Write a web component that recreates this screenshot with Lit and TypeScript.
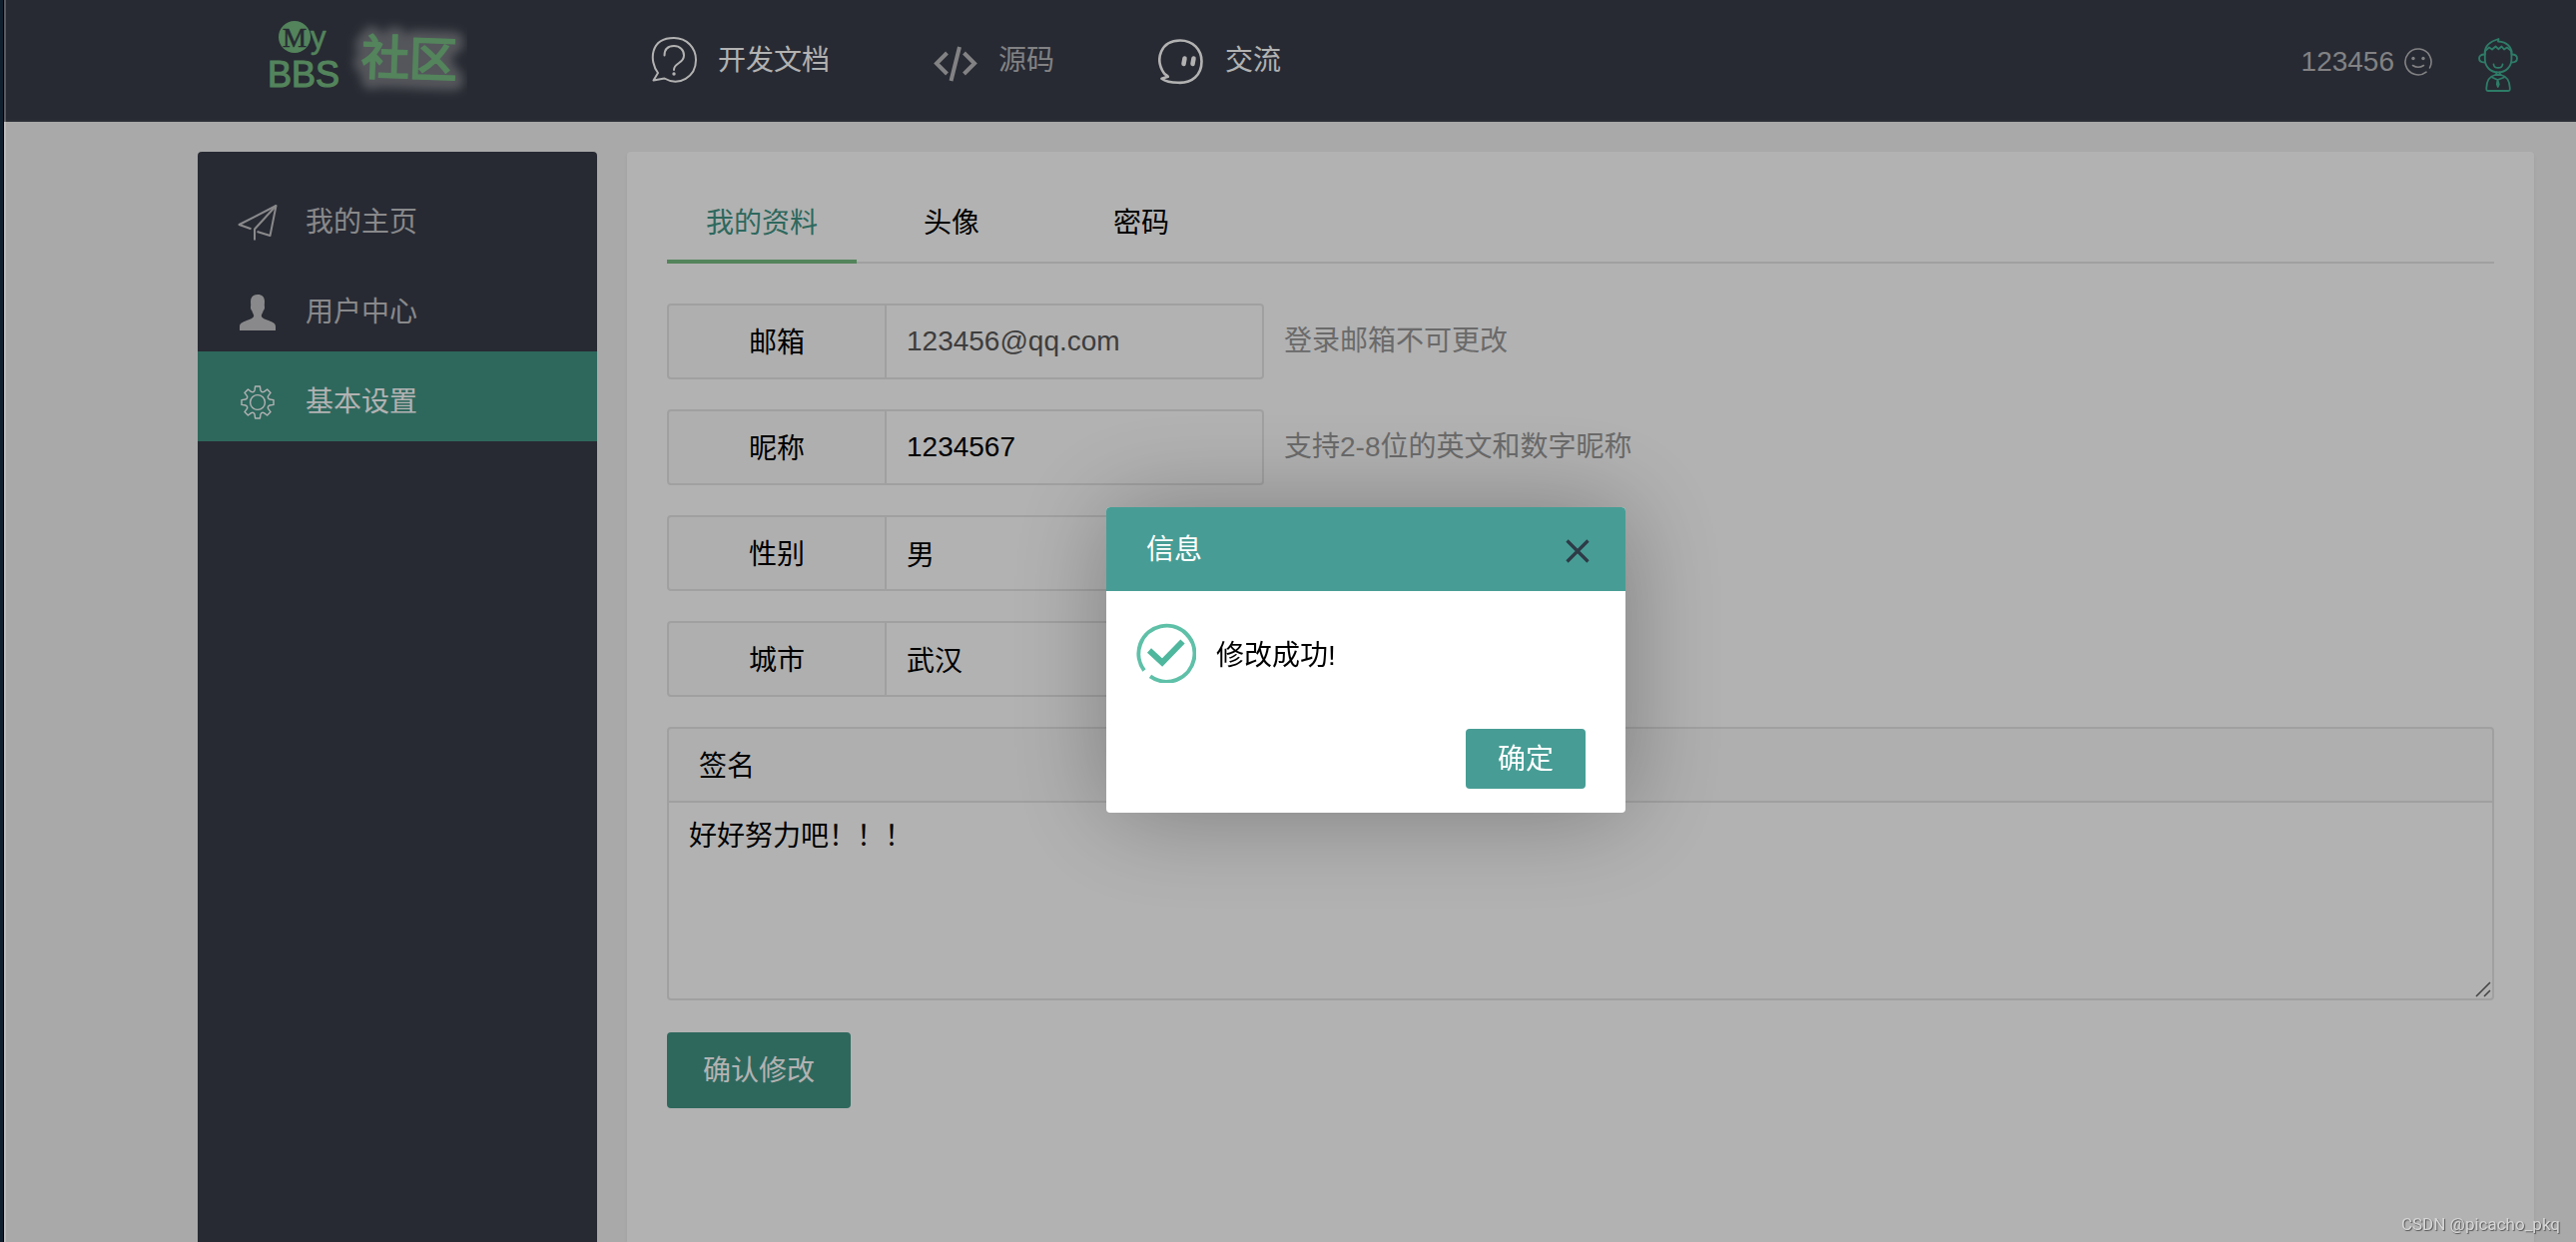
import { LitElement, html, css, svg } from "lit";
import { customElement, state } from "lit/decorators.js";
import { classMap } from "lit/directives/class-map.js";

/** Outline of a cog with eight teeth, centred on (c, c). */
function cogPath(c: number, outer: number, root: number): string {
  const pts: string[] = [];
  for (let i = 0; i < 8; i++) {
    const mid = (i * Math.PI) / 4 - Math.PI / 2;
    const at = (r: number, a: number) =>
      `${(c + r * Math.cos(mid + a)).toFixed(2)} ${(c + r * Math.sin(mid + a)).toFixed(2)}`;
    pts.push(
      `${i ? "L" : "M"}${at(root, -0.24)} L${at(outer, -0.15)} L${at(outer, 0.15)} L${at(root, 0.24)} Q${at(root - 2, Math.PI / 8)} ${at(root, Math.PI / 4 - 0.24)}`
    );
  }
  return pts.join(" ") + "Z";
}

const icons = {
  question: svg`<svg class="icon" width="46" height="46" viewBox="0 0 46 46" fill="none" stroke="currentColor" stroke-width="2" stroke-linejoin="round" aria-hidden="true">
    <path d="M7 36 C-2 24 -1 1 23 1 C36 1 45 11 45 23 C45 40 28 50 13.500 41.500 L2.500 43.500 Z"/>
    <path d="M13.500 18.500 C13.500 12 17 9 23 9 S33 13 33 18.500 C33 27 23 25.500 23 33" stroke-linecap="round"/>
    <circle cx="23" cy="37" r="1.700" fill="currentColor" stroke="none"/></svg>`,
  code: svg`<svg class="icon" width="44" height="44" viewBox="0 -8 44 44" fill="none" stroke="currentColor" stroke-width="4" aria-hidden="true">
    <path d="M13.500 7 L3 17.500 L13.500 28 M30.500 7 L41 17.500 L30.500 28 M26 1 L17.500 35"/></svg>`,
  chat: svg`<svg class="icon" width="46" height="50" viewBox="0 -4 46 50" fill="none" stroke="currentColor" stroke-width="2.600" stroke-linecap="round" stroke-linejoin="round" aria-hidden="true">
    <path d="M6 34.500 C-4 20 3 1.500 22 1.500 C35 1.500 43.500 11 43.500 22.500 C43.500 36 34 44.500 20 43.800 C13 43.800 7 42.500 3.500 39.800 L9.800 37.800 C9.500 36.500 7 36 6 34.500 Z"/>
    <path d="M26.500 19.500 L25.500 25 M35.500 19.500 L34.500 25" stroke-width="4.500"/></svg>`,
  smile: svg`<svg class="icon" width="28" height="28" viewBox="0 0 28 28" fill="none" stroke="currentColor" stroke-width="1.600" stroke-linecap="round" aria-hidden="true">
    <path d="M22 24.200 A13 13 0 1 1 25.500 20"/>
    <path d="M8.500 17.500 Q14 21 19.500 17.500"/>
    <circle cx="9" cy="10.500" r="1.700" fill="currentColor" stroke="none"/><circle cx="19" cy="10.500" r="1.700" fill="currentColor" stroke="none"/></svg>`,
  avatar: svg`<svg class="icon" width="40" height="54" viewBox="0 0 40 54" fill="none" stroke="currentColor" stroke-width="1.800" stroke-linejoin="round" stroke-linecap="round" aria-hidden="true">
    <path d="M6.800 16 C6 8 12 3.500 20.500 1 L20 3.500 C29 4 34 9 33.400 16"/>
    <path d="M7 13 L11 9.500 L14 11.500 L17.500 8.500 L20.300 11.200 L23.500 8.500 L26 11.500 L29 9.500 L33.200 13"/>
    <path d="M6.800 13 V21 C6.800 29 12.500 34.500 20.100 34.500 S33.400 29 33.400 21 V13"/>
    <path d="M6.500 16.500 C2.500 16.500 1 18.500 1 20.500 S2.800 24.500 6.800 24.500 M33.700 16.500 C37.500 16.500 39 18.500 39 20.500 S37.400 24.500 33.400 24.500"/>
    <path d="M15.500 26.500 C16 31 24 31 24.500 26.500"/>
    <path d="M18.300 34.500 V37 M21.800 34.500 V37 M17 37 C11 38.500 8.500 44 8.300 50 C8.200 52.500 8.500 53 10.500 53 H29.500 C31.600 53 31.900 52.500 31.800 50 C31.500 44 29 38.500 23 37 Z"/>
    <path d="M14 39.500 L19.500 42 L26 39.500 M19.500 42 L18.800 46.500 L19.800 49 L20.800 46.500 Z"/></svg>`,
  plane: svg`<svg class="icon" width="40" height="38" viewBox="0 0 40 38" fill="none" stroke="currentColor" stroke-width="2" stroke-linejoin="round" aria-hidden="true">
    <path d="M13.500 25.300 L1.500 21 L38.500 2 L32.500 32 L19.500 28"/><path d="M38.500 2 L17 25.500 V36.500"/></svg>`,
  user: svg`<svg class="icon" width="36" height="36" viewBox="0 0 36 36" fill="currentColor" aria-hidden="true">
    <path d="M18 0 C22.500 0 25 2.500 25 7 L24.800 11 C25.400 13 24.800 15 23.800 16 C23.300 18.300 22 19.500 21.800 21 C21.800 23.500 25 24.500 29 26 C33.500 27.800 36 29 36 32 V36 H0 V32 C0 29 2.500 27.800 7 26 C11 24.500 14.200 23.500 14.200 21 C14 19.500 12.700 18.300 12.200 16 C11.200 15 10.600 13 11.200 11 L11 7 C11 2.500 13.500 0 18 0 Z"/></svg>`,
  cog: svg`<svg class="icon" width="34" height="34" viewBox="0 0 34 34" fill="none" stroke="currentColor" stroke-width="1.400" stroke-linejoin="round" aria-hidden="true">
    <path d=${cogPath(17, 16.2, 12.4)}/><circle cx="17" cy="17" r="7.400"/></svg>`,
  close: svg`<svg width="24" height="24" viewBox="0 0 24 24" stroke="currentColor" stroke-width="3.200" aria-hidden="true"><path d="M1.500 1.500 L22.500 22.500 M22.500 1.500 L1.500 22.500"/></svg>`,
  success: svg`<svg class="icon" width="60" height="60" viewBox="0 0 60 60" fill="none" aria-hidden="true">
    <path d="M14 53.400 A28 28 0 1 0 8 47.500" stroke="#5fc0a8" stroke-width="4"/>
    <path d="M13 27.500 L26 39.500 L46.500 18.500" stroke="#4fb79e" stroke-width="6"/></svg>`,
  grip: svg`<svg class="grip" width="16" height="16" viewBox="0 0 16 16" stroke="#646464" stroke-width="1.600" aria-hidden="true"><path d="M1 15 L15 1 M9 15 L15 9"/></svg>`,
};

@customElement("app-root")
export class AppRoot extends LitElement {
  @state() private tab = 0;
  @state() private dialogOpen = true;

  private readonly tabs = ["我的资料", "头像", "密码"];
  private readonly nav = [
    { text: "开发文档", icon: icons.question, bright: true },
    { text: "源码", icon: icons.code, bright: false },
    { text: "交流", icon: icons.chat, bright: true },
  ];
  private readonly menu = [
    { text: "我的主页", icon: icons.plane, current: false },
    { text: "用户中心", icon: icons.user, current: false },
    { text: "基本设置", icon: icons.cog, current: true },
  ];
  private readonly fields = [
    { id: "email", label: "邮箱", value: "123456@qq.com", hint: "登录邮箱不可更改", locked: true },
    { id: "nickname", label: "昵称", value: "1234567", hint: "支持2-8位的英文和数字昵称", locked: false },
    { id: "gender", label: "性别", value: "男", hint: "", locked: false },
    { id: "city", label: "城市", value: "武汉", hint: "", locked: false },
  ];

  static styles = css`
    :host {
      display: flex;
      flex-direction: column;
      box-sizing: border-box;
      min-height: 100vh;
      padding-left: 4px;
      background: #f2f2f2;
      color: #000;
      font: 28px/40px "Liberation Sans", "Noto Sans CJK SC", sans-serif;
    }
    * { box-sizing: border-box; }
    button, input, textarea { font: inherit; color: inherit; margin: 0; }
    button { border: 0; cursor: pointer; }
    a { color: inherit; text-decoration: none; }
    .icon { display: block; flex: none; }

    .header {
      display: flex;
      align-items: center;
      height: 122px;
      padding: 0 58px 0 264px;
      background: #393d49;
      border-bottom: 2px solid #41444f;
      color: #bababd;
    }
    .logo { display: block; width: 384px; height: 120px; }
    .logo svg { display: block; }
    .nav { display: flex; align-items: center; gap: 104px; }
    .link { display: flex; align-items: center; gap: 21px; }
    .link span { padding-top: 2px; }
    .bright { color: #fff; }
    .account { display: flex; align-items: center; gap: 10px; margin-left: auto; padding-top: 4px; }
    .avatar { margin-left: 36px; padding-top: 6px; color: #43b296; }

    .main { display: flex; flex: 1; gap: 30px; padding: 30px 42px 0 194px; }
    .sidebar {
      flex: none;
      width: 400px;
      padding: 20px 0;
      border-radius: 4px 4px 0 0;
      background: #393d49;
      color: #c4c4c7;
    }
    .item { display: flex; align-items: center; gap: 28px; height: 90px; padding: 12px 40px 0; }
    .item.current { background: #439586; color: #fff; }
    .slot { display: flex; justify-content: center; width: 40px; }

    .panel {
      flex: 1;
      min-width: 0;
      padding: 30px 40px;
      border-radius: 4px 4px 0 0;
      background: #fff;
      box-shadow: 0 2px 4px rgba(0, 0, 0, 0.05);
    }
    .tabs { display: flex; border-bottom: 2px solid #e6e6e6; }
    .tab {
      width: 190px;
      height: 82px;
      margin-bottom: -2px;
      padding: 6px 0 0;
      background: none;
      border-bottom: 4px solid transparent;
    }
    .tab.active { color: #439586; border-bottom-color: #77be83; }

    .form { display: flex; flex-direction: column; align-items: stretch; gap: 30px; padding-top: 40px; }
    .row { display: flex; align-items: center; }
    .label {
      width: 220px;
      height: 76px;
      padding: 18px 0 14px;
      border: 2px solid #e6e6e6;
      border-radius: 4px 0 0 4px;
      background: #fbfbfb;
      text-align: center;
    }
    .input {
      width: 380px;
      height: 76px;
      margin-left: -2px;
      padding: 0 20px;
      border: 2px solid #e6e6e6;
      border-radius: 0 4px 4px 0;
      background: #fff;
      outline: none;
    }
    .input:disabled { color: #585858; }
    .hint { padding-left: 20px; color: #999; }
    .sign { position: relative; display: flex; flex-direction: column; }
    .sign .label { width: 100%; padding-left: 30px; border-radius: 4px 4px 0 0; text-align: left; }
    .textarea {
      width: 100%;
      height: 200px;
      margin-top: -2px;
      padding: 14px 20px;
      border: 2px solid #e6e6e6;
      border-radius: 0 0 4px 4px;
      background: #fff;
      resize: none;
      outline: none;
    }
    .grip { position: absolute; right: 3px; bottom: 3px; }
    .submit {
      align-self: flex-start;
      height: 76px;
      margin-top: 2px;
      padding: 2px 36px 0;
      border-radius: 4px;
      background: #439586;
      color: #fff;
    }

    .shade {
      position: fixed;
      inset: 0;
      display: grid;
      place-items: center;
      padding: 78px 0 0 156px;
      background: rgba(0, 0, 0, 0.3);
    }
    .dialog {
      width: 520px;
      border-radius: 4px;
      background: #fff;
      box-shadow: 2px 2px 100px rgba(0, 0, 0, 0.3);
      overflow: hidden;
    }
    .titlebar {
      display: flex;
      align-items: center;
      justify-content: space-between;
      height: 84px;
      padding: 2px 36px 0 40px;
      background: #479d95;
      color: #fff;
    }
    .title { margin: 0; font: inherit; }
    .close { display: flex; padding: 2px 0 0; background: none; color: #2e3a47; width: 24px; }
    .message { display: flex; align-items: center; gap: 20px; padding: 32px 30px 46px; }
    .text { margin: 0; padding-top: 6px; }
    .actions { display: flex; justify-content: flex-end; padding: 0 40px 24px; }
    .ok { width: 120px; height: 60px; padding: 2px 0 0; border-radius: 4px; background: #479d95; color: #fff; }

    .edge {
      position: fixed;
      inset: 0 auto 0 0;
      width: 6px;
      background: linear-gradient(90deg, #11202f 3px, #000 3px 4px, rgba(255, 255, 255, 0.22) 4px);
    }
    .watermark {
      position: fixed;
      right: 16px;
      bottom: 6px;
      font: 17px/24px Roboto, sans-serif;
      color: #d6d6d6;
      text-shadow: 1px 1px 1px #555;
    }
  `;

  render() {
    return html`
      <header class="header">
        <a class="logo" href="#home" aria-label="My BBS 社区">
          <svg width="200" height="120" viewBox="0 0 200 120" fill="#77be83">
            <defs>
              <filter id="glow" x="-30%" y="-50%" width="160%" height="200%">
                <feGaussianBlur stdDeviation="5" />
              </filter>
            </defs>
            <circle cx="27" cy="37" r="16" />
            <text x="27" y="47" text-anchor="middle" font-family="Liberation Serif" font-size="27" fill="#393d49" stroke="#393d49" stroke-width="0.6">M</text>
            <text x="43" y="48" font-family="Liberation Sans" font-size="31" stroke="#77be83" stroke-width="0.6">y</text>
            <text x="0" y="87" font-family="Liberation Sans" font-size="36" stroke="#77be83" stroke-width="1.2">BBS</text>
            <g font-family="Noto Sans CJK SC" font-size="48" transform="rotate(2 140 58)">
              <text x="94" y="77" fill="#fff" stroke="#fff" stroke-width="18" stroke-linejoin="round" opacity="0.32" filter="url(#glow)" aria-hidden="true">社区</text>
              <text x="94" y="76" stroke="#77be83" stroke-width="2">社区</text>
            </g>
          </svg>
        </a>
        <nav class="nav">
          ${this.nav.map(
            (n) => html`<a class=${classMap({ link: true, bright: n.bright })} href="#">${n.icon}<span>${n.text}</span></a>`
          )}
        </nav>
        <div class="account">
          <span>123456</span>${icons.smile}
          <a class="avatar" href="#profile" aria-label="头像">${icons.avatar}</a>
        </div>
      </header>

      <div class="main">
        <nav class="sidebar">
          ${this.menu.map(
            (m) => html`<a class=${classMap({ item: true, current: m.current })} href="#"><span class="slot">${m.icon}</span><span>${m.text}</span></a>`
          )}
        </nav>
        <main class="panel">
          <div class="tabs" role="tablist">
            ${this.tabs.map(
              (t, i) => html`<button class=${classMap({ tab: true, active: i === this.tab })} role="tab"
                aria-selected=${i === this.tab ? "true" : "false"} @click=${() => (this.tab = i)}>${t}</button>`
            )}
          </div>
          <form class="form" @submit=${this.save}>
            ${this.fields.map(
              (f) => html`<div class="row">
                <label class="label" for=${f.id}>${f.label}</label>
                <input class="input" id=${f.id} type="text" .value=${f.value} ?disabled=${f.locked} />
                ${f.hint ? html`<span class="hint">${f.hint}</span>` : ""}
              </div>`
            )}
            <div class="sign">
              <label class="label" for="sign">签名</label>
              <textarea class="textarea" id="sign" .value=${"好好努力吧！！！"}></textarea>
              ${icons.grip}
            </div>
            <button class="submit" type="submit">确认修改</button>
          </form>
        </main>
      </div>

      ${this.dialogOpen
        ? html`<div class="shade">
            <section class="dialog" role="dialog" aria-modal="true" aria-labelledby="title">
              <div class="titlebar">
                <h2 class="title" id="title">信息</h2>
                <button class="close" aria-label="关闭" @click=${this.dismiss}>${icons.close}</button>
              </div>
              <div class="message">${icons.success}<p class="text">修改成功!</p></div>
              <div class="actions"><button class="ok" @click=${this.dismiss}>确定</button></div>
            </section>
          </div>`
        : ""}
      <div class="edge"></div>
      <div class="watermark">CSDN @picacho_pkq</div>
    `;
  }

  private save(e: Event) {
    e.preventDefault();
    this.dialogOpen = true;
  }

  private dismiss() {
    this.dialogOpen = false;
  }
}
